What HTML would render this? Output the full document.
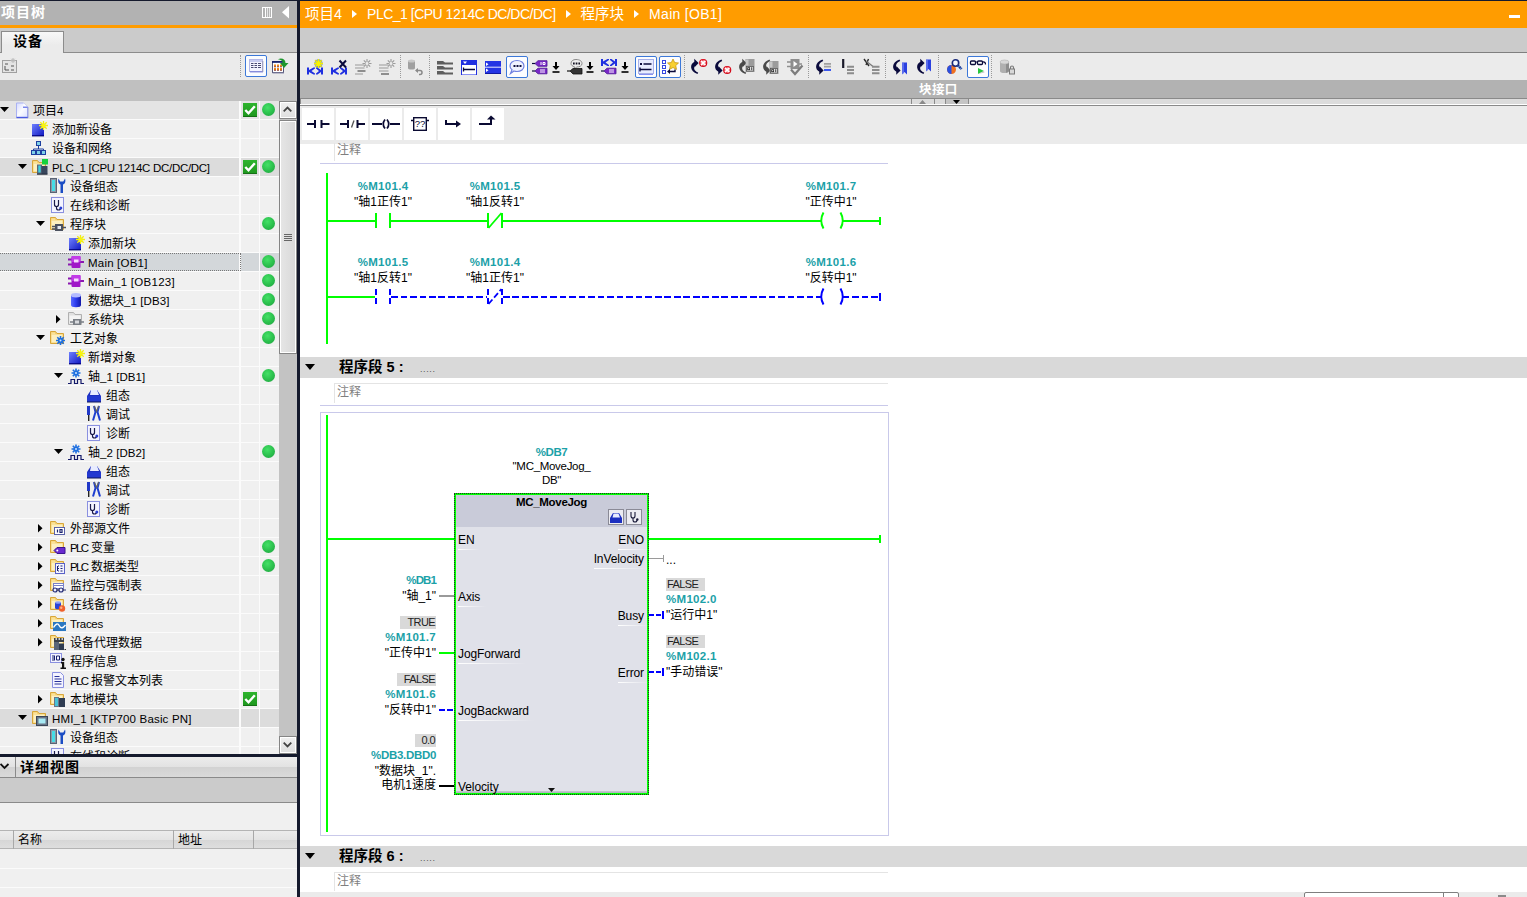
<!DOCTYPE html>
<html lang="zh-CN"><head><meta charset="utf-8"><title>TIA Portal - Main [OB1]</title>
<style>

html,body{margin:0;padding:0;}
body{width:1527px;height:897px;overflow:hidden;background:#fff;position:relative;
 font-family:"Liberation Sans", "Noto Sans CJK SC", sans-serif;font-size:12px;color:#000;}
.a{position:absolute;}
.t{position:absolute;white-space:nowrap;line-height:1;}
svg{position:absolute;overflow:visible;}

.row{position:absolute;left:0;width:240px;height:18px;}
.row .t{top:3px;font-size:12px;}
.sep{position:absolute;left:0;width:279px;height:1px;background:#fbfbfb;}
.dot{position:absolute;width:13px;height:13px;border-radius:50%;background:radial-gradient(circle at 42% 36%,#44e066 0%,#2cc24e 50%,#22a843 85%,#1e9a3c 100%);}
.chk{position:absolute;width:14px;height:13px;background:linear-gradient(#2db42d,#1f981f);box-shadow:0 1px 0 #157015;}
.hl{background:#dcdcdc;}
.tb{position:absolute;}
.nethead{position:absolute;left:300px;width:1227px;height:23px;background:#d9d9d9;}
.nethead .t{left:38px;top:4px;font-size:14px;font-weight:bold;font-family:"Liberation Serif","Noto Serif CJK SC",serif;}
.addr{position:absolute;white-space:nowrap;line-height:1;font-size:11.5px;font-weight:bold;color:#1ba1a8;letter-spacing:0.3px;}
.sym{position:absolute;white-space:nowrap;line-height:1;font-size:12px;color:#000;margin-top:1px;}
.val{position:absolute;white-space:nowrap;line-height:13px;height:13px;font-size:11px;letter-spacing:-0.6px;color:#222;background:#d9d9d9;padding:0 2px;}
.vr{padding:0 7px 0 1px;}
.vl{padding:0 1px 0 7px;}
.lp{font-size:12px;letter-spacing:-0.1px;}
.pin{position:absolute;white-space:nowrap;line-height:1;font-size:12px;color:#000;}
.bc{display:inline-block;width:0;height:0;border-left:5px solid #fff;border-top:4px solid transparent;border-bottom:4px solid transparent;margin:0 10px 1px 10px;}
.l{font-size:11.5px;letter-spacing:-0.3px;}
.l14{font-size:14px;letter-spacing:-0.5px;}
.ul{position:absolute;left:0;right:-6px;bottom:-4px;height:1px;background:linear-gradient(90deg,#fff,rgba(255,255,255,0));}

</style></head><body>
<div class="a" style="left:0;top:0;width:1527px;height:1px;background:#151a2d"></div>
<div class="a" style="left:0;top:1px;width:297px;height:24px;background:#b2b2b2"></div>
<span class="t" style="left:1px;top:5px;font-size:14px;letter-spacing:1px;font-weight:bold;color:#fff">项目树</span>
<svg style="left:262px;top:7px" width="10" height="11" viewBox="0 0 10 11"><rect x="0.500" y="0.500" width="9" height="10" fill="none" stroke="#fff"/><path d="M3.500 1V10" stroke="#fff"/><path d="M5.500 1V10M7.500 1V10" stroke="#e6e6e6"/></svg>
<svg style="left:282px;top:6px" width="7" height="12" viewBox="0 0 7 12"><path d="M7 0V12.500L0 6.250Z" fill="#fff"/></svg>
<div class="a" style="left:0;top:25px;width:297px;height:3px;background:#ff9c00"></div>
<div class="a" style="left:0;top:28px;width:297px;height:24px;background:#cbcbcb"></div>
<div class="a" style="left:0;top:52px;width:297px;height:1px;background:#8c8c8c"></div>
<div class="a" style="left:1px;top:31px;width:61px;height:22px;background:linear-gradient(#f8f8f8,#ebebeb 60%);border:1px solid #8c8c8c;border-bottom:none;box-sizing:content-box"></div>
<span class="t" style="left:13px;top:34px;font-size:14px;letter-spacing:1px;font-weight:bold;color:#000">设备</span>
<div class="a" style="left:0;top:53px;width:297px;height:27px;background:#ebebeb"></div>
<svg style="left:2px;top:58px" width="16" height="16" viewBox="0 0 16 16"><rect x="0.500" y="2.500" width="14" height="12" fill="#e4e4e4" stroke="#a0a0a0"/><path d="M3 6H6M3 8V12H7M9 8H12M9 12H12" stroke="#555" fill="none"/><path d="M11 0V5M8.500 2.500H13.500M9.300 .8L12.700 4.200M12.700 .8L9.300 4.200" stroke="#b8b8b8"/></svg>
<div class="a" style="left:240px;top:55px;width:0;height:22px;border-left:1px dotted #9a9a9a"></div>
<div class="a" style="left:245px;top:55px;width:22px;height:22px;border:1px solid #3c78d8;border-radius:2px;background:#fafcff;box-sizing:border-box"></div>
<svg style="left:249px;top:59px" width="14" height="14" viewBox="0 0 14 14"><rect x="0.500" y="0.500" width="13" height="12" fill="#f4f4ff" stroke="#b4b8e8"/><path d="M1 2H13" stroke="#c8ccf0" stroke-width="2"/><path d="M2 4.500H4.500M5.500 4.500H8M9 4.500H12M2 6.500H4.500M5.500 6.500H8M9 6.500H12M2 8.500H4.500M5.500 8.500H8M9 8.500H12" stroke="#4a4a72" stroke-width="1.200"/><path d="M1 12.800H14" stroke="#7a80d8" stroke-width="1.200"/><path d="M13.800 2V13" stroke="#9a9ab8"/></svg>
<svg style="left:272px;top:58px" width="17" height="16" viewBox="0 0 17 16"><rect x="0.500" y="3.500" width="11" height="11" fill="#fff" stroke="#55587a"/><path d="M0 4H12" stroke="#0c1a6a" stroke-width="1.600"/><path d="M2 7.500H4M5 7.500H7M8 7.500H10M2 11H4M5 11H7M8 11H10" stroke="#f08a1a" stroke-width="2.200"/><path d="M2 8.800H4M5 8.800H7M8 8.800H10M2 12.300H4M5 12.300H7M8 12.300H10" stroke="#7a1a0a" stroke-width=".8"/><path d="M6 1.200C10 -.5 13.500 1.500 13.500 5H16.500L12 10L8 5H10.800C10.800 3 9 1.800 6 1.200Z" fill="#1e962e"/><path d="M.5 15H12" stroke="#8a8aa8"/></svg>
<div class="a" style="left:0;top:80px;width:297px;height:21px;background:#c0c0c0"></div>
<div class="a" style="left:0;top:101px;width:279px;height:653px;background:#f0f0f0;overflow:hidden" id="tree">
<div class="a" style="left:0;top:0;width:279px;height:18px;background:#e4e4e4"></div>
<svg style="left:0px;top:6px" width="9" height="5" viewBox="0 0 9 5"><path d="M0 0H9L4.5 5Z" fill="#000"/></svg>
<svg style="left:16px;top:1px" width="16" height="16" viewBox="0 0 16 16"><defs><linearGradient id="gPJ" x1="0" y1="0" x2="1" y2="1"><stop offset="0" stop-color="#d4daff"/><stop offset=".5" stop-color="#fbfbff"/><stop offset="1" stop-color="#dde2ff"/></linearGradient></defs><path d="M.5 1H7.500L11.500 5V15.500H.5Z" fill="url(#gPJ)" stroke="#aab2f2"/><path d="M7.500 1V5H11.500" fill="#fff" stroke="none"/><path d="M7 5.200H11.500" stroke="#5a6ae6" stroke-width="1.200"/><path d="M.5 15.500H12" stroke="#4a5ae2" stroke-width="1.400"/><path d="M12 5V16" stroke="#8a92d8" stroke-width=".8"/></svg>
<span class="t" style="left:33px;top:4px;font-size:12px">项目<span class="l">4</span></span>
<div class="chk" style="left:243px;top:2px"><svg style="left:0;top:0" width="14" height="14" viewBox="0 0 14 14"><path d="M2.300 7L5.500 10.300L11.800 3.200" fill="none" stroke="#fff" stroke-width="2.400"/></svg></div>
<div class="dot" style="left:262px;top:2px"></div>
<div class="sep" style="top:18px"></div>
<svg style="left:31px;top:20px" width="16" height="16" viewBox="0 0 16 16"><defs><linearGradient id="gAN" x1="0" y1="0" x2="1" y2="1"><stop offset="0" stop-color="#6e80ff"/><stop offset="1" stop-color="#1018c0"/></linearGradient></defs><rect x="1" y="3" width="12" height="12" fill="url(#gAN)"/><path d="M1 14.800H13" stroke="#00007a" stroke-width="1.200"/><g stroke="#f2ee10" stroke-width="1.300"><path d="M12.500 0V9M8 4.500H17M9.300 1.300L15.700 7.700M15.700 1.300L9.300 7.700"/></g><circle cx="12.500" cy="4.500" r="2" fill="#f8f410"/></svg>
<span class="t" style="left:52px;top:23px;font-size:12px">添加新设备</span>
<div class="sep" style="top:37px"></div>
<svg style="left:31px;top:39px" width="16" height="16" viewBox="0 0 16 16"><rect x="5.5" y="1.5" width="4" height="4" fill="#7fd0e8" stroke="#1d3fa0"/><path d="M7.5 6V9M2.5 11V9H12.5V11" fill="none" stroke="#1d3fa0"/><rect x="0.5" y="10.5" width="4" height="4" fill="#7fd0e8" stroke="#1d3fa0"/><rect x="5.5" y="10.5" width="4" height="4" fill="#7fd0e8" stroke="#1d3fa0"/><rect x="10.5" y="10.5" width="4" height="4" fill="#7fd0e8" stroke="#1d3fa0"/></svg>
<span class="t" style="left:52px;top:42px;font-size:12px">设备和网络</span>
<div class="sep" style="top:56px"></div>
<div class="a" style="left:0;top:57px;width:279px;height:18px;background:#dcdcdc"></div>
<svg style="left:18px;top:63px" width="9" height="5" viewBox="0 0 9 5"><path d="M0 0H9L4.5 5Z" fill="#000"/></svg>
<svg style="left:32px;top:58px" width="16" height="16" viewBox="0 0 16 16"><path d="M.5 1.500H5.500L7 3.500H13.500V13.500H.5Z" fill="#f6d272" stroke="#d8a63a"/><path d="M1.500 4.500H12.500V12.500H1.500Z" fill="#fdf0c0"/><path d="M1.500 2.500H5V4.500H1.500Z" fill="#fbe29a"/><rect x="5" y="5.500" width="5" height="9.500" fill="#5a6678"/><rect x="6.300" y="6.500" width="2.400" height="7" fill="#3fd2e0"/><rect x="9.500" y="7" width="6" height="8" fill="#39465c"/><rect x="10" y="0" width="6" height="5.500" fill="#14d23c"/><path d="M5 15.200H15.500" stroke="#1c2434"/></svg>
<span class="t" style="left:52px;top:61px;font-size:12px"><span class="l">PLC_1 [CPU 1214C DC/DC/DC]</span></span>
<div class="chk" style="left:243px;top:59px"><svg style="left:0;top:0" width="14" height="14" viewBox="0 0 14 14"><path d="M2.300 7L5.500 10.300L11.800 3.200" fill="none" stroke="#fff" stroke-width="2.400"/></svg></div>
<div class="dot" style="left:262px;top:59px"></div>
<div class="sep" style="top:75px"></div>
<svg style="left:50px;top:77px" width="16" height="16" viewBox="0 0 16 16"><rect x="0.500" y="0.500" width="6" height="14" fill="#8e96a4" stroke="#5a6474"/><rect x="2" y="2" width="3" height="11" fill="#46dce6"/><path d="M8.500 .5C7.500 3.500 8.500 6 10.500 6.500V15H13V6.500C15 6 16 3.500 15 .5L13.300 3.500H10.200Z" fill="#1a4cc4"/></svg>
<span class="t" style="left:70px;top:80px;font-size:12px">设备组态</span>
<div class="sep" style="top:94px"></div>
<svg style="left:50px;top:96px" width="16" height="16" viewBox="0 0 16 16"><rect x="1.5" y="0.5" width="12" height="15" fill="#f4f4ff" stroke="#8a90e0"/><path d="M4.5 3V7.5A2 2 0 0 0 8.500 7.500V3M6.5 9.500V11A2 2 0 0 0 10.500 11" fill="none" stroke="#1a1a4a" stroke-width="1.2"/><circle cx="10.800" cy="11" r="1.500" fill="#2a3fd0"/></svg>
<span class="t" style="left:70px;top:99px;font-size:12px">在线和诊断</span>
<div class="sep" style="top:113px"></div>
<svg style="left:36px;top:120px" width="9" height="5" viewBox="0 0 9 5"><path d="M0 0H9L4.5 5Z" fill="#000"/></svg>
<svg style="left:50px;top:115px" width="16" height="16" viewBox="0 0 16 16"><path d="M.5 1.500H5.500L7 3.500H13.500V13.500H.5Z" fill="#f6d272" stroke="#d8a63a"/><path d="M1.500 4.500H12.500V12.500H1.500Z" fill="#fdf0c0"/><path d="M1.500 2.500H5V4.500H1.500Z" fill="#fbe29a"/><rect x="5" y="8" width="8" height="7" fill="#4c5260"/><path d="M2 10.500H5M2 13H5M13 11.500H16" stroke="#4c5260" stroke-width="1.500"/><rect x="7.500" y="10" width="3.500" height="3" fill="#e4e8f0"/></svg>
<span class="t" style="left:70px;top:118px;font-size:12px">程序块</span>
<div class="dot" style="left:262px;top:116px"></div>
<div class="sep" style="top:132px"></div>
<svg style="left:68px;top:134px" width="16" height="16" viewBox="0 0 16 16"><defs><linearGradient id="gAN" x1="0" y1="0" x2="1" y2="1"><stop offset="0" stop-color="#6e80ff"/><stop offset="1" stop-color="#1018c0"/></linearGradient></defs><rect x="1" y="3" width="12" height="12" fill="url(#gAN)"/><path d="M1 14.800H13" stroke="#00007a" stroke-width="1.200"/><g stroke="#f2ee10" stroke-width="1.300"><path d="M12.500 0V9M8 4.500H17M9.300 1.300L15.700 7.700M15.700 1.300L9.300 7.700"/></g><circle cx="12.500" cy="4.500" r="2" fill="#f8f410"/></svg>
<span class="t" style="left:88px;top:137px;font-size:12px">添加新块</span>
<div class="sep" style="top:151px"></div>
<div class="a" style="left:0;top:152px;width:279px;height:18px;background:#d3d7da"></div>
<div class="a" style="left:-1px;top:152px;width:242px;height:18px;border:1px dotted #777;box-sizing:border-box;z-index:2"></div>
<svg style="left:68px;top:153px" width="16" height="16" viewBox="0 0 16 16"><path d="M0 5.500H4M0 10.500H4M12 8H16" stroke="#8a18b0" stroke-width="2"/><rect x="3.500" y="2" width="9" height="12" rx="1" fill="#a018c8"/><rect x="3.500" y="2" width="9" height="6" rx="1" fill="#c23ce8"/><rect x="6" y="5.500" width="4.500" height="3" fill="#f6dcfc"/></svg>
<span class="t" style="left:88px;top:156px;font-size:12px"><span class="l" style="letter-spacing:0.2px">Main [OB1]</span></span>
<div class="dot" style="left:262px;top:154px"></div>
<div class="sep" style="top:170px"></div>
<svg style="left:68px;top:172px" width="16" height="16" viewBox="0 0 16 16"><path d="M0 5.500H4M0 10.500H4M12 8H16" stroke="#8a18b0" stroke-width="2"/><rect x="3.500" y="2" width="9" height="12" rx="1" fill="#a018c8"/><rect x="3.500" y="2" width="9" height="6" rx="1" fill="#c23ce8"/><rect x="6" y="5.500" width="4.500" height="3" fill="#f6dcfc"/></svg>
<span class="t" style="left:88px;top:175px;font-size:12px"><span class="l" style="letter-spacing:0.28px">Main_1 [OB123]</span></span>
<div class="dot" style="left:262px;top:173px"></div>
<div class="sep" style="top:189px"></div>
<svg style="left:68px;top:191px" width="16" height="16" viewBox="0 0 16 16"><defs><linearGradient id="gDB" x1="0" y1="0" x2="1" y2="0"><stop offset="0" stop-color="#5c6cff"/><stop offset=".45" stop-color="#3040f0"/><stop offset="1" stop-color="#1218a8"/></linearGradient></defs><path d="M3 3V13A5 2.200 0 0 0 13 13V3Z" fill="url(#gDB)"/><ellipse cx="8" cy="3.200" rx="5" ry="2.200" fill="#b4bcff"/></svg>
<span class="t" style="left:88px;top:194px;font-size:12px">数据块<span class="l" style="letter-spacing:0.08px">_1 [DB3]</span></span>
<div class="dot" style="left:262px;top:192px"></div>
<div class="sep" style="top:208px"></div>
<svg style="left:56px;top:214px" width="4" height="8" viewBox="0 0 4 8"><path d="M0 0V8.500L4.500 4.250Z" fill="#000"/></svg>
<svg style="left:68px;top:210px" width="16" height="16" viewBox="0 0 16 16"><path d="M.5 1.500H5.500L7 3.500H13.500V13.500H.5Z" fill="#e0e0e0" stroke="#b0b0b0"/><path d="M1.500 4.500H12.500V12.500H1.500Z" fill="#f4f4f4"/><rect x="5" y="8" width="8" height="6" fill="#7a7f86"/><path d="M2 11H5M13 11H16" stroke="#7a7f86" stroke-width="1.5"/><rect x="7" y="9.5" width="4" height="3" fill="#d8dade"/></svg>
<span class="t" style="left:88px;top:213px;font-size:12px">系统块</span>
<div class="dot" style="left:262px;top:211px"></div>
<div class="sep" style="top:227px"></div>
<svg style="left:36px;top:234px" width="9" height="5" viewBox="0 0 9 5"><path d="M0 0H9L4.5 5Z" fill="#000"/></svg>
<svg style="left:50px;top:229px" width="16" height="16" viewBox="0 0 16 16"><path d="M.5 1.500H5.500L7 3.500H13.500V13.500H.5Z" fill="#f6d272" stroke="#d8a63a"/><path d="M1.500 4.500H12.500V12.500H1.500Z" fill="#fdf0c0"/><path d="M1.500 2.500H5V4.500H1.500Z" fill="#fbe29a"/><g transform="translate(10.500 10.500)"><g stroke="#1e6fe0" stroke-width="1.600"><path d="M0 -4.500V4.500M-4.500 0H4.500M-3.200 -3.200L3.200 3.200M3.200 -3.200L-3.200 3.200"/></g><circle r="2.600" fill="#1e6fe0"/><circle r="1" fill="#cfe4ff"/></g></svg>
<span class="t" style="left:70px;top:232px;font-size:12px">工艺对象</span>
<div class="dot" style="left:262px;top:230px"></div>
<div class="sep" style="top:246px"></div>
<svg style="left:68px;top:248px" width="16" height="16" viewBox="0 0 16 16"><defs><linearGradient id="gAN" x1="0" y1="0" x2="1" y2="1"><stop offset="0" stop-color="#6e80ff"/><stop offset="1" stop-color="#1018c0"/></linearGradient></defs><rect x="1" y="3" width="12" height="12" fill="url(#gAN)"/><path d="M1 14.800H13" stroke="#00007a" stroke-width="1.200"/><g stroke="#f2ee10" stroke-width="1.300"><path d="M12.500 0V9M8 4.500H17M9.300 1.300L15.700 7.700M15.700 1.300L9.300 7.700"/></g><circle cx="12.500" cy="4.500" r="2" fill="#f8f410"/></svg>
<span class="t" style="left:88px;top:251px;font-size:12px">新增对象</span>
<div class="sep" style="top:265px"></div>
<svg style="left:54px;top:272px" width="9" height="5" viewBox="0 0 9 5"><path d="M0 0H9L4.5 5Z" fill="#000"/></svg>
<svg style="left:68px;top:267px" width="16" height="16" viewBox="0 0 16 16"><g transform="translate(8 5)"><g stroke="#1e6fe0" stroke-width="1.600"><path d="M0 -4.500V4.500M-4.500 0H4.500M-3.200 -3.200L3.200 3.200M3.200 -3.200L-3.200 3.200"/></g><circle r="2.600" fill="#1e6fe0"/><circle r="1" fill="#cfe4ff"/></g><path d="M0 15.500H3V11.500H6.500V15.500H9.500V11.500H13V15.500H16" fill="none" stroke="#141a6a" stroke-width="1.200"/></svg>
<span class="t" style="left:88px;top:270px;font-size:12px">轴<span class="l" style="letter-spacing:0.06px">_1 [DB1]</span></span>
<div class="dot" style="left:262px;top:268px"></div>
<div class="sep" style="top:284px"></div>
<svg style="left:86px;top:286px" width="16" height="16" viewBox="0 0 16 16"><path d="M1 9L5 3H11L15 9V15H1Z" fill="#1c2fc0"/><path d="M5 3H11L13 8H4Z" fill="#e8ecff"/><path d="M1 9H15V15H1Z" fill="#2238d0"/><path d="M1 15H15" stroke="#0c145a"/></svg>
<span class="t" style="left:106px;top:289px;font-size:12px">组态</span>
<div class="sep" style="top:303px"></div>
<svg style="left:86px;top:305px" width="16" height="16" viewBox="0 0 16 16"><rect x="1" y="0" width="3" height="9" fill="#2038c8"/><rect x="2" y="9" width="1.400" height="6" fill="#222"/><path d="M8 0L9.500 6L7 14.500M13 0L11.500 6L14 14.500" fill="none" stroke="#1e3fd0" stroke-width="2"/><path d="M8.300 0L10.500 5.500L12.700 0" fill="none" stroke="#666" stroke-width="1.200"/></svg>
<span class="t" style="left:106px;top:308px;font-size:12px">调试</span>
<div class="sep" style="top:322px"></div>
<svg style="left:86px;top:324px" width="16" height="16" viewBox="0 0 16 16"><rect x="1.5" y="0.5" width="12" height="15" fill="#f4f4ff" stroke="#8a90e0"/><path d="M4.5 3V7.5A2 2 0 0 0 8.500 7.500V3M6.5 9.500V11A2 2 0 0 0 10.500 11" fill="none" stroke="#1a1a4a" stroke-width="1.2"/><circle cx="10.800" cy="11" r="1.500" fill="#2a3fd0"/></svg>
<span class="t" style="left:106px;top:327px;font-size:12px">诊断</span>
<div class="sep" style="top:341px"></div>
<svg style="left:54px;top:348px" width="9" height="5" viewBox="0 0 9 5"><path d="M0 0H9L4.5 5Z" fill="#000"/></svg>
<svg style="left:68px;top:343px" width="16" height="16" viewBox="0 0 16 16"><g transform="translate(8 5)"><g stroke="#1e6fe0" stroke-width="1.600"><path d="M0 -4.500V4.500M-4.500 0H4.500M-3.200 -3.200L3.200 3.200M3.200 -3.200L-3.200 3.200"/></g><circle r="2.600" fill="#1e6fe0"/><circle r="1" fill="#cfe4ff"/></g><path d="M0 15.500H3V11.500H6.500V15.500H9.500V11.500H13V15.500H16" fill="none" stroke="#141a6a" stroke-width="1.200"/></svg>
<span class="t" style="left:88px;top:346px;font-size:12px">轴<span class="l" style="letter-spacing:0.06px">_2 [DB2]</span></span>
<div class="dot" style="left:262px;top:344px"></div>
<div class="sep" style="top:360px"></div>
<svg style="left:86px;top:362px" width="16" height="16" viewBox="0 0 16 16"><path d="M1 9L5 3H11L15 9V15H1Z" fill="#1c2fc0"/><path d="M5 3H11L13 8H4Z" fill="#e8ecff"/><path d="M1 9H15V15H1Z" fill="#2238d0"/><path d="M1 15H15" stroke="#0c145a"/></svg>
<span class="t" style="left:106px;top:365px;font-size:12px">组态</span>
<div class="sep" style="top:379px"></div>
<svg style="left:86px;top:381px" width="16" height="16" viewBox="0 0 16 16"><rect x="1" y="0" width="3" height="9" fill="#2038c8"/><rect x="2" y="9" width="1.400" height="6" fill="#222"/><path d="M8 0L9.500 6L7 14.500M13 0L11.500 6L14 14.500" fill="none" stroke="#1e3fd0" stroke-width="2"/><path d="M8.300 0L10.500 5.500L12.700 0" fill="none" stroke="#666" stroke-width="1.200"/></svg>
<span class="t" style="left:106px;top:384px;font-size:12px">调试</span>
<div class="sep" style="top:398px"></div>
<svg style="left:86px;top:400px" width="16" height="16" viewBox="0 0 16 16"><rect x="1.5" y="0.5" width="12" height="15" fill="#f4f4ff" stroke="#8a90e0"/><path d="M4.5 3V7.5A2 2 0 0 0 8.500 7.500V3M6.5 9.500V11A2 2 0 0 0 10.500 11" fill="none" stroke="#1a1a4a" stroke-width="1.2"/><circle cx="10.800" cy="11" r="1.500" fill="#2a3fd0"/></svg>
<span class="t" style="left:106px;top:403px;font-size:12px">诊断</span>
<div class="sep" style="top:417px"></div>
<svg style="left:38px;top:423px" width="4" height="8" viewBox="0 0 4 8"><path d="M0 0V8.500L4.500 4.250Z" fill="#000"/></svg>
<svg style="left:50px;top:419px" width="16" height="16" viewBox="0 0 16 16"><path d="M.5 1.500H5.500L7 3.500H13.500V13.500H.5Z" fill="#f6d272" stroke="#d8a63a"/><path d="M1.500 4.500H12.500V12.500H1.500Z" fill="#fdf0c0"/><path d="M1.500 2.500H5V4.500H1.500Z" fill="#fbe29a"/><rect x="4.500" y="7.500" width="10" height="7" fill="#fff" stroke="#5a62a8"/><path d="M7.500 9.500V12.500M10 9.500H12V12.500H10Z" fill="none" stroke="#1a2270" stroke-width="1.200"/></svg>
<span class="t" style="left:70px;top:422px;font-size:12px">外部源文件</span>
<div class="sep" style="top:436px"></div>
<svg style="left:38px;top:442px" width="4" height="8" viewBox="0 0 4 8"><path d="M0 0V8.500L4.500 4.250Z" fill="#000"/></svg>
<svg style="left:50px;top:438px" width="16" height="16" viewBox="0 0 16 16"><path d="M.5 1.500H5.500L7 3.500H13.500V13.500H.5Z" fill="#f6d272" stroke="#d8a63a"/><path d="M1.500 4.500H12.500V12.500H1.500Z" fill="#fdf0c0"/><path d="M1.500 2.500H5V4.500H1.500Z" fill="#fbe29a"/><path d="M4 11.500L7 8.500H15V14.500H7Z" fill="#6a2ad0" stroke="#3a1590"/><circle cx="7.300" cy="11.500" r="1" fill="#fff"/></svg>
<span class="t" style="left:70px;top:441px;font-size:12px"><span class="l" style="letter-spacing:-1.6px">PLC</span> 变量</span>
<div class="dot" style="left:262px;top:439px"></div>
<div class="sep" style="top:455px"></div>
<svg style="left:38px;top:461px" width="4" height="8" viewBox="0 0 4 8"><path d="M0 0V8.500L4.500 4.250Z" fill="#000"/></svg>
<svg style="left:50px;top:457px" width="16" height="16" viewBox="0 0 16 16"><path d="M.5 1.500H5.500L7 3.500H13.500V13.500H.5Z" fill="#f6d272" stroke="#d8a63a"/><path d="M1.500 4.500H12.500V12.500H1.500Z" fill="#fdf0c0"/><path d="M1.500 2.500H5V4.500H1.500Z" fill="#fbe29a"/><rect x="5.500" y="5.500" width="9" height="10" fill="#f4f4ff" stroke="#5a62c8"/><path d="M8 8H9M8 10.500H9M8 13H9M10.500 8H12.500M10.500 10.500H12.500M10.500 13H12.500M7.500 8V13" stroke="#1a2270"/></svg>
<span class="t" style="left:70px;top:460px;font-size:12px"><span class="l" style="letter-spacing:-1.6px">PLC</span> 数据类型</span>
<div class="dot" style="left:262px;top:458px"></div>
<div class="sep" style="top:474px"></div>
<svg style="left:38px;top:480px" width="4" height="8" viewBox="0 0 4 8"><path d="M0 0V8.500L4.500 4.250Z" fill="#000"/></svg>
<svg style="left:50px;top:476px" width="16" height="16" viewBox="0 0 16 16"><path d="M.5 1.500H5.500L7 3.500H13.500V13.500H.5Z" fill="#f6d272" stroke="#d8a63a"/><path d="M1.500 4.500H12.500V12.500H1.500Z" fill="#fdf0c0"/><path d="M1.500 2.500H5V4.500H1.500Z" fill="#fbe29a"/><rect x="3.500" y="6.500" width="10" height="5" fill="#fff" stroke="#7880c8"/><path d="M4 8.500H13" stroke="#7880c8"/><circle cx="5" cy="13" r="2" fill="#eef" stroke="#26307a" stroke-width="1.200"/><circle cx="11" cy="13" r="2" fill="#eef" stroke="#26307a" stroke-width="1.200"/><path d="M7 13H9M13 13H16" stroke="#26307a" stroke-width="1.200"/></svg>
<span class="t" style="left:70px;top:479px;font-size:12px">监控与强制表</span>
<div class="sep" style="top:493px"></div>
<svg style="left:38px;top:499px" width="4" height="8" viewBox="0 0 4 8"><path d="M0 0V8.500L4.500 4.250Z" fill="#000"/></svg>
<svg style="left:50px;top:495px" width="16" height="16" viewBox="0 0 16 16"><path d="M.5 1.500H5.500L7 3.500H13.500V13.500H.5Z" fill="#f6d272" stroke="#d8a63a"/><path d="M1.500 4.500H12.500V12.500H1.500Z" fill="#fdf0c0"/><path d="M1.500 2.500H5V4.500H1.500Z" fill="#fbe29a"/><path d="M5 6.500V12A3 1.300 0 0 0 11 12V6.500Z" fill="#2a44d8"/><ellipse cx="8" cy="6.500" rx="3" ry="1.300" fill="#8ea0f8"/><circle cx="12" cy="12.500" r="3.200" fill="#f0602a"/><circle cx="11.200" cy="11.700" r="1.200" fill="#fbb08c"/></svg>
<span class="t" style="left:70px;top:498px;font-size:12px">在线备份</span>
<div class="sep" style="top:512px"></div>
<svg style="left:38px;top:518px" width="4" height="8" viewBox="0 0 4 8"><path d="M0 0V8.500L4.500 4.250Z" fill="#000"/></svg>
<svg style="left:50px;top:514px" width="16" height="16" viewBox="0 0 16 16"><path d="M.5 1.500H5.500L7 3.500H13.500V13.500H.5Z" fill="#f6d272" stroke="#d8a63a"/><path d="M1.500 4.500H12.500V12.500H1.500Z" fill="#fdf0c0"/><path d="M1.500 2.500H5V4.500H1.500Z" fill="#fbe29a"/><rect x="3" y="7" width="13" height="9" fill="#2b78c2"/><path d="M3.500 12.500C6 8 8 8 9.500 11S13 13 15.500 10" fill="none" stroke="#fff" stroke-width="1.400"/></svg>
<span class="t" style="left:70px;top:517px;font-size:12px"><span class="l">Traces</span></span>
<div class="sep" style="top:531px"></div>
<svg style="left:38px;top:537px" width="4" height="8" viewBox="0 0 4 8"><path d="M0 0V8.500L4.500 4.250Z" fill="#000"/></svg>
<svg style="left:50px;top:533px" width="16" height="16" viewBox="0 0 16 16"><path d="M.5 1.500H5.500L7 3.500H13.500V13.500H.5Z" fill="#f6d272" stroke="#d8a63a"/><path d="M1.500 4.500H12.500V12.500H1.500Z" fill="#fdf0c0"/><path d="M1.500 2.500H5V4.500H1.500Z" fill="#fbe29a"/><rect x="4" y="4" width="10" height="4" fill="#3a4048"/><path d="M5.500 5H7M8.500 5H10M11.500 5H13" stroke="#fff" stroke-width="1.500"/><rect x="4" y="8" width="5" height="8" fill="#5a6678"/><rect x="9" y="9.500" width="5" height="6.500" fill="#2f3c52"/><path d="M14.500 15.500H16" stroke="#333"/></svg>
<span class="t" style="left:70px;top:536px;font-size:12px">设备代理数据</span>
<div class="sep" style="top:550px"></div>
<svg style="left:50px;top:552px" width="16" height="16" viewBox="0 0 16 16"><rect x="0.500" y="0.500" width="11" height="9" fill="#f4f4ff" stroke="#8a90e0"/><path d="M2 3H4M2 5H4M2 7H4M4.500 2.500V7.500M6.500 3H9.500V7H6.500Z" fill="none" stroke="#1a2270"/><circle cx="13" cy="6.500" r="1.700" fill="#111"/><path d="M11 9H14.200V14.500H16V16H10.500V14.500H12V10.500H11Z" fill="#111"/></svg>
<span class="t" style="left:70px;top:555px;font-size:12px">程序信息</span>
<div class="sep" style="top:569px"></div>
<svg style="left:50px;top:571px" width="16" height="16" viewBox="0 0 16 16"><path d="M2.500 .5H10.500L13.500 3.500V15.500H2.500Z" fill="#f4f4ff" stroke="#8a90e0"/><path d="M4.500 4.500H9.500M4.500 7H11.500M4.500 9.500H11.500M4.500 12H11.500" stroke="#2a349a" stroke-width="1.200"/></svg>
<span class="t" style="left:70px;top:574px;font-size:12px"><span class="l" style="letter-spacing:-1.6px">PLC</span> 报警文本列表</span>
<div class="sep" style="top:588px"></div>
<svg style="left:38px;top:594px" width="4" height="8" viewBox="0 0 4 8"><path d="M0 0V8.500L4.500 4.250Z" fill="#000"/></svg>
<svg style="left:50px;top:590px" width="16" height="16" viewBox="0 0 16 16"><path d="M.5 1.500H5.500L7 3.500H13.500V13.500H.5Z" fill="#f6d272" stroke="#d8a63a"/><path d="M1.500 4.500H12.500V12.500H1.500Z" fill="#fdf0c0"/><path d="M1.500 2.500H5V4.500H1.500Z" fill="#fbe29a"/><rect x="4" y="6" width="5" height="10" fill="#6a7688"/><rect x="5" y="7" width="3" height="8" fill="#49c2d8"/><rect x="9" y="7" width="6" height="9" fill="#2f3c52"/></svg>
<span class="t" style="left:70px;top:593px;font-size:12px">本地模块</span>
<div class="chk" style="left:243px;top:591px"><svg style="left:0;top:0" width="14" height="14" viewBox="0 0 14 14"><path d="M2.300 7L5.500 10.300L11.800 3.200" fill="none" stroke="#fff" stroke-width="2.400"/></svg></div>
<div class="sep" style="top:607px"></div>
<div class="a" style="left:0;top:608px;width:279px;height:18px;background:#dcdcdc"></div>
<svg style="left:18px;top:614px" width="9" height="5" viewBox="0 0 9 5"><path d="M0 0H9L4.5 5Z" fill="#000"/></svg>
<svg style="left:32px;top:609px" width="16" height="16" viewBox="0 0 16 16"><path d="M.5 1.500H5.500L7 3.500H13.500V13.500H.5Z" fill="#f6d272" stroke="#d8a63a"/><path d="M1.500 4.500H12.500V12.500H1.500Z" fill="#fdf0c0"/><path d="M1.500 2.500H5V4.500H1.500Z" fill="#fbe29a"/><rect x="4.500" y="6.500" width="11" height="9" fill="#6a7688" stroke="#3b4658"/><rect x="6.500" y="8.500" width="7" height="5" fill="#a8eaf4"/></svg>
<span class="t" style="left:52px;top:612px;font-size:12px"><span class="l" style="letter-spacing:0.18px">HMI_1 [KTP700 Basic PN]</span></span>
<div class="sep" style="top:626px"></div>
<svg style="left:50px;top:628px" width="16" height="16" viewBox="0 0 16 16"><rect x="0.500" y="0.500" width="6" height="14" fill="#8e96a4" stroke="#5a6474"/><rect x="2" y="2" width="3" height="11" fill="#46dce6"/><path d="M8.500 .5C7.500 3.500 8.500 6 10.500 6.500V15H13V6.500C15 6 16 3.500 15 .5L13.300 3.500H10.200Z" fill="#1a4cc4"/></svg>
<span class="t" style="left:70px;top:631px;font-size:12px">设备组态</span>
<div class="sep" style="top:645px"></div>
<svg style="left:50px;top:647px" width="16" height="16" viewBox="0 0 16 16"><rect x="1.5" y="0.5" width="12" height="15" fill="#f4f4ff" stroke="#8a90e0"/><path d="M4.5 3V7.5A2 2 0 0 0 8.500 7.500V3M6.5 9.500V11A2 2 0 0 0 10.500 11" fill="none" stroke="#1a1a4a" stroke-width="1.2"/><circle cx="10.800" cy="11" r="1.500" fill="#2a3fd0"/></svg>
<span class="t" style="left:70px;top:650px;font-size:12px">在线和诊断</span>
<div class="sep" style="top:664px"></div>
<div class="a" style="left:239px;top:0;width:2px;height:653px;background:#fbfbfb"></div>
<div class="a" style="left:259px;top:0;width:1px;height:653px;background:#fbfbfb"></div>
</div>
<div class="a" style="left:279px;top:101px;width:18px;height:653px;background:#c3c3c3"></div>
<div class="a" style="left:279px;top:101px;width:18px;height:18px;background:linear-gradient(#f0f0f0,#dedede);border:1px solid #858585;box-shadow:inset 0 0 0 1px #fff;box-sizing:border-box"></div>
<svg style="left:283px;top:106px" width="9" height="6" viewBox="0 0 9 6"><path d="M.7 5.300L4.500 1.500L8.300 5.300" fill="none" stroke="#444" stroke-width="1.800"/></svg>
<div class="a" style="left:279px;top:120px;width:18px;height:234px;background:linear-gradient(90deg,#e6e6e6,#d8d8d8);border:1px solid #858585;box-shadow:inset 0 0 0 1px #fff;box-sizing:border-box"></div>
<svg style="left:284px;top:234px" width="8" height="7" viewBox="0 0 8 7"><path d="M0 .5H8M0 2.500H8M0 4.500H8M0 6.500H8" stroke="#666"/></svg>
<div class="a" style="left:279px;top:736px;width:18px;height:18px;background:linear-gradient(#f0f0f0,#dedede);border:1px solid #858585;box-shadow:inset 0 0 0 1px #fff;box-sizing:border-box"></div>
<svg style="left:283px;top:742px" width="9" height="6" viewBox="0 0 9 6"><path d="M.7 .7L4.500 4.500L8.300 .7" fill="none" stroke="#444" stroke-width="1.800"/></svg>
<div class="a" style="left:0;top:754px;width:297px;height:3px;background:#151a2d"></div>
<div class="a" style="left:0;top:757px;width:297px;height:20px;background:linear-gradient(#ececec,#e2e2e2 50%,#d2d2d2 52%,#dadada)"></div>
<div class="a" style="left:15px;top:757px;width:1px;height:20px;background:#8a8a8a"></div>
<svg style="left:0px;top:763px" width="9" height="7" viewBox="0 0 9 7"><path d="M.5 1L4.500 5L8.500 1" fill="none" stroke="#111" stroke-width="1.800"/></svg>
<span class="t" style="left:20px;top:760px;font-size:14px;letter-spacing:1px;font-weight:bold">详细视图</span>
<div class="a" style="left:0;top:777px;width:297px;height:1px;background:#8a8a8a"></div>
<div class="a" style="left:0;top:778px;width:297px;height:24px;background:#cbcbcb"></div>
<div class="a" style="left:0;top:802px;width:297px;height:1px;background:#8a8a8a"></div>
<div class="a" style="left:0;top:803px;width:297px;height:94px;background:#f0f0f0"></div>
<div class="a" style="left:0;top:830px;width:297px;height:19px;background:linear-gradient(#ececec,#e4e4e4 50%,#d6d6d6 52%,#dedede);border-top:1px solid #b4b4b4;border-bottom:1px solid #b4b4b4;box-sizing:border-box"></div>
<div class="a" style="left:13px;top:830px;width:1px;height:19px;background:#a8a8a8"></div>
<div class="a" style="left:173px;top:830px;width:1px;height:19px;background:#a8a8a8"></div>
<div class="a" style="left:253px;top:830px;width:1px;height:19px;background:#a8a8a8"></div>
<span class="t" style="left:18px;top:834px;font-size:12px">名称</span>
<span class="t" style="left:178px;top:834px;font-size:12px">地址</span>
<div class="a" style="left:0;top:868px;width:297px;height:1px;background:#fbfbfb"></div>
<div class="a" style="left:0;top:887px;width:297px;height:1px;background:#fbfbfb"></div>
<div class="a" style="left:297px;top:1px;width:3px;height:896px;background:#151a2d"></div>

<div class="a" style="left:300px;top:1px;width:1227px;height:27px;background:#ff9c00;"></div>
<span class="t" style="left:305px;top:7px;font-size:14.5px;color:#fff">项目4<i class="bc"></i><span class="l14">PLC_1 [CPU 1214C DC/DC/DC]</span><i class="bc"></i>程序块<i class="bc"></i><span class="l14" style="letter-spacing:0.3px">Main [OB1]</span></span>
<div class="a" style="left:1509px;top:15px;width:11px;height:3px;background:#fff;"></div>
<div class="a" style="left:300px;top:28px;width:1227px;height:24px;background:#cbcbcb;"></div>
<div class="a" style="left:300px;top:52px;width:1227px;height:1px;background:#7f7f7f;"></div>
<div class="a" style="left:300px;top:53px;width:1227px;height:27px;background:#ebebeb;"></div>
<svg style="left:307px;top:59px" width="16" height="16" viewBox="0 0 16 16"><g fill="#2030e0"><rect x="0" y="8.500" width="2" height="7"/><path d="M2 11L6.500 8.500H8V9.500L4.500 12L8 14.500V15.500H6.500L2 13Z"/><rect x="14" y="8.500" width="2" height="7"/><path d="M14 11L10.500 8.500H9V9.500L12 12L9 14.500V15.500H10.500L14 13Z"/></g><g stroke="#16407a" stroke-width="2.200" opacity=".55"><path d="M11.500 0V9M7 4.500H16M8.300 1.300L14.700 7.700M14.700 1.300L8.300 7.700"/></g><g stroke="#f4f000" stroke-width="1.300"><path d="M11.500 0V9M7 4.500H16M8.300 1.300L14.700 7.700M14.700 1.300L8.300 7.700"/></g><circle cx="11.500" cy="4.500" r="2.300" fill="#f8f400"/></svg>
<svg style="left:331px;top:59px" width="16" height="16" viewBox="0 0 16 16"><g fill="#2030e0"><rect x="0" y="8.500" width="2" height="7"/><path d="M2 11L6.500 8.500H8V9.500L4.500 12L8 14.500V15.500H6.500L2 13Z"/><rect x="14" y="8.500" width="2" height="7"/><path d="M14 11L10.500 8.500H9V9.500L12 12L9 14.500V15.500H10.500L14 13Z"/></g><path d="M8.500 1.500L15 8.500M15 1.500L8.500 8.500" stroke="#0a0a3c" stroke-width="2"/></svg>
<svg style="left:355px;top:59px" width="16" height="16" viewBox="0 0 16 16"><rect x="0" y="5" width="9.5" height="2" fill="#c2c2c2"/><rect x="0" y="8" width="9.5" height="2" fill="#c2c2c2"/><rect x="2.5" y="11" width="8" height="2" fill="#8e8e8e"/><rect x="0" y="14" width="8" height="2" fill="#c2c2c2"/><g stroke="#9c9c9c" stroke-width="1.100"><path d="M12 0V3M12 6V9M7.500 4.500H10.500M13.500 4.500H16.500M8.800 1.300L11 3.500M13 5.500L15.200 7.700M15.200 1.300L13 3.500M11 5.500L8.800 7.700"/></g></svg>
<svg style="left:379px;top:59px" width="16" height="16" viewBox="0 0 16 16"><rect x="0" y="5" width="9.5" height="2" fill="#c2c2c2"/><rect x="0" y="8" width="9.5" height="2" fill="#c2c2c2"/><rect x="0" y="11" width="9.5" height="2" fill="#c2c2c2"/><rect x="2" y="14" width="8" height="2" fill="#8e8e8e"/><g stroke="#9c9c9c" stroke-width="1.100"><path d="M12 0V3M12 6V9M7.500 4.500H10.500M13.500 4.500H16.500M8.800 1.300L11 3.500M13 5.500L15.200 7.700M15.200 1.300L13 3.500M11 5.500L8.800 7.700"/></g></svg>
<div class="a" style="left:400px;top:55px;width:0;height:23px;border-left:1px dotted #9a9a9a"></div>
<svg style="left:407px;top:59px" width="16" height="16" viewBox="0 0 16 16"><path d="M1 2V9A3.500 1.500 0 0 0 8 9V2Z" fill="#a0a0a0"/><ellipse cx="4.500" cy="2" rx="3.500" ry="1.500" fill="#c8c8c8"/><path d="M9 11.500H13A2 2 0 0 1 13 15.500H12" fill="none" stroke="#8a8a8a" stroke-width="1.500"/><path d="M11 9L8 11.500L11 14Z" fill="#8a8a8a"/></svg>
<div class="a" style="left:429px;top:55px;width:0;height:23px;border-left:1px dotted #9a9a9a"></div>
<svg style="left:437px;top:59px" width="16" height="16" viewBox="0 0 16 16"><path d="M0 2H6L8 3.5H16V5.5H0Z" fill="#5e5e5e"/><path d="M0 7H6L8 8.5H16V10.5H0Z" fill="#5e5e5e"/><path d="M0 12H6L8 13.5H16V15.5H0Z" fill="#5e5e5e"/></svg>
<svg style="left:461px;top:59px" width="16" height="16" viewBox="0 0 16 16"><rect x="0.500" y="1.500" width="15" height="14" fill="#fff" stroke="#2030e0"/><rect x="1" y="2" width="14" height="4" fill="#2030e0"/><path d="M2 2.500H6L4 5Z" fill="#fff"/><path d="M2.500 10.500H14M2.500 8.500V12.500" stroke="#0a0a3c" stroke-width="1.300"/><path d="M1 15.500H15" stroke="#8890f0"/></svg>
<svg style="left:485px;top:59px" width="16" height="16" viewBox="0 0 16 16"><rect x="0" y="2" width="16" height="12.500" fill="#2434e4"/><path d="M0 8.200H16" stroke="#e8eaff" stroke-width="1"/><path d="M1 3.500L3.500 5.200L1 7ZM1 9.500L3.500 11.200L1 13Z" fill="#fff"/><path d="M0 14.500H16" stroke="#1018a0"/></svg>
<div class="a" style="left:506px;top:56px;width:22px;height:22px;background:#fdfdff;border:1px solid #3c78d8;border-radius:2px;box-sizing:border-box"></div>
<svg style="left:509px;top:59px" width="16" height="16" viewBox="0 0 16 16"><path d="M8 1.500C12 1.500 15 3.800 15 7S12 12.500 8 12.500C7 12.500 6 12.300 5 12L1.500 14.500L3 10.800C1.500 9.800 1 8.500 1 7C1 3.800 4 1.500 8 1.500Z" fill="#f0f2ff" stroke="#7080e0" stroke-width="1.200"/><path d="M4.500 7H6.500M7.500 7H9.500M10.500 7H12.500" stroke="#101040" stroke-width="2"/></svg>
<svg style="left:532px;top:59px" width="16" height="16" viewBox="0 0 16 16"><path d="M0 4.5H3" stroke="#0a0a3c" stroke-width="1.200"/><path d="M3 4.5L6 1.7H15V7.3H6Z" fill="#7a28c8" stroke="#4a1590" stroke-width=".8"/><path d="M9 3V6M11 3.500H13V5.500H11Z" stroke="#fff" fill="none"/><path d="M0 12H3" stroke="#0a0a3c" stroke-width="1.200"/><path d="M3 12L6 9.2H15V14.8H6Z" fill="#7a28c8" stroke="#4a1590" stroke-width=".8"/><path d="M8 11H13M8 13H13" stroke="#fff"/></svg>
<svg style="left:552px;top:62px" width="8" height="11" viewBox="0 0 8 11"><path d="M4 0V6" stroke="#000" stroke-width="2"/><path d="M0.500 4H7.500L4 8Z" fill="#000"/><path d="M0.500 10H7.500" stroke="#000" stroke-width="1.600"/></svg>
<svg style="left:567px;top:59px" width="16" height="16" viewBox="0 0 16 16"><path d="M9 0.500C12.500 .5 15 2 15 4.500S12.500 8 9.500 8L7 10.500L7.500 7.800C5.500 7.300 4 6.200 4 4.500C4 2 6 .5 9 .5Z" fill="#ededed" stroke="#8a8a8a"/><path d="M6 4.500H7.700M8.700 4.500H10.400M11.400 4.500H13" stroke="#101020" stroke-width="1.800"/><path d="M0 12H3" stroke="#111" stroke-width="1.200"/><path d="M3 12L6 9.500H15V15H6Z" fill="#333" stroke="#111" stroke-width=".8"/></svg>
<svg style="left:586px;top:62px" width="8" height="11" viewBox="0 0 8 11"><path d="M4 0V6" stroke="#000" stroke-width="2"/><path d="M0.500 4H7.500L4 8Z" fill="#000"/><path d="M0.500 10H7.500" stroke="#000" stroke-width="1.600"/></svg>
<svg style="left:601px;top:59px" width="16" height="16" viewBox="0 0 16 16"><g transform="translate(0 -8.500)"><g fill="#2030e0"><rect x="0" y="8.500" width="2" height="7"/><path d="M2 11L6.500 8.500H8V9.500L4.500 12L8 14.500V15.500H6.500L2 13Z"/><rect x="14" y="8.500" width="2" height="7"/><path d="M14 11L10.500 8.500H9V9.500L12 12L9 14.500V15.500H10.500L14 13Z"/></g></g><path d="M0 12H3" stroke="#0a0a3c" stroke-width="1.200"/><path d="M3 12L6 9.2H15V14.8H6Z" fill="#7a28c8" stroke="#4a1590" stroke-width=".8"/><path d="M8 11H13M8 13H13" stroke="#fff"/></svg>
<svg style="left:621px;top:62px" width="8" height="11" viewBox="0 0 8 11"><path d="M4 0V6" stroke="#000" stroke-width="2"/><path d="M0.500 4H7.500L4 8Z" fill="#000"/><path d="M0.500 10H7.500" stroke="#000" stroke-width="1.600"/></svg>
<div class="a" style="left:635px;top:56px;width:22px;height:22px;background:#fdfdff;border:1px solid #3c78d8;border-radius:2px;box-sizing:border-box"></div>
<svg style="left:638px;top:59px" width="16" height="16" viewBox="0 0 16 16"><rect x="0.500" y="0.500" width="15" height="14" fill="#e8ecff" stroke="#a8b0e8"/><rect x="2" y="4" width="2" height="2" fill="#0a0a3c"/><path d="M5.500 5H13.500M2 10.500H13.500M2 8.500V12.500" stroke="#0a0a3c" stroke-width="1.400"/><path d="M1 15.500H15" stroke="#8890f0"/></svg>
<div class="a" style="left:659px;top:56px;width:22px;height:22px;background:#fdfdff;border:1px solid #3c78d8;border-radius:2px;box-sizing:border-box"></div>
<svg style="left:662px;top:59px" width="16" height="16" viewBox="0 0 16 16"><g fill="#fff" stroke="#3848e0"><rect x="0.500" y="1.500" width="3" height="3"/><rect x="0.500" y="6.500" width="3" height="3"/><rect x="0.500" y="11.500" width="3" height="3"/></g><path d="M11 0L12.700 3.600L16.500 4L13.700 6.600L14.500 10.400L11 8.500L7.500 10.400L8.300 6.600L5.500 4L9.300 3.600Z" fill="#f8d030" stroke="#c89810" stroke-width=".8"/><path d="M13 10.500V12.500H7" fill="none" stroke="#0a0a3c" stroke-width="1.400"/><path d="M8 10L5 12.500L8 15Z" fill="#0a0a3c"/></svg>
<div class="a" style="left:684px;top:55px;width:0;height:23px;border-left:1px dotted #9a9a9a"></div>
<svg style="left:691px;top:59px" width="16" height="16" viewBox="0 0 16 16"><path d="M3.800 2.500C-1.500 5 -1.500 12 6.500 15L7.200 13.600C3 12 2 8.500 4.500 6.500Z" fill="#0a0a3c"/><path d="M3.200 -.2L7.600 4L3.600 8.200Z" fill="#0a0a3c"/><circle cx="12.2" cy="4" r="4.100" fill="#d00818"/><circle cx="12.2" cy="3.5" r="3.200" fill="#e82030"/><path d="M10 1.8l4.400 4.400m0 -4.400l-4.400 4.400" stroke="#fff" stroke-width="1.700"/><path d="M12.2 1.2v5.600M9.4 4h5.600" stroke="#fff" stroke-width=".7"/></svg>
<svg style="left:715px;top:59px" width="16" height="16" viewBox="0 0 16 16"><g transform="matrix(1 0 0 -1 0 15.500)"><path d="M3.800 2.500C-1.500 5 -1.500 12 6.500 15L7.200 13.600C3 12 2 8.500 4.500 6.500Z" fill="#0a0a3c"/><path d="M3.200 -.2L7.600 4L3.600 8.200Z" fill="#0a0a3c"/></g><circle cx="12.2" cy="11" r="4.100" fill="#d00818"/><circle cx="12.2" cy="10.5" r="3.200" fill="#e82030"/><path d="M10 8.8l4.400 4.400m0 -4.400l-4.400 4.400" stroke="#fff" stroke-width="1.700"/><path d="M12.2 8.2v5.600M9.4 11h5.600" stroke="#fff" stroke-width=".7"/></svg>
<svg style="left:739px;top:59px" width="16" height="16" viewBox="0 0 16 16"><path d="M3.800 2.500C-1.500 5 -1.500 12 6.500 15L7.200 13.600C3 12 2 8.500 4.500 6.500Z" fill="#4a4a4a"/><path d="M3.200 -.2L7.600 4L3.600 8.200Z" fill="#4a4a4a"/><rect x="6.5" y="0" width="9" height="13" fill="#9c9c9c"/><rect x="7" y="0.5" width="2.500" height="6" fill="#c8c8c8"/><rect x="7.5" y="7.5" width="7" height="4.500" fill="#fff" stroke="#555" stroke-width=".8"/><rect x="8.7" y="8.7" width="2" height="2" fill="none" stroke="#222" stroke-width=".9"/><path d="M12.8 8.2v3" stroke="#222" stroke-width="1"/></svg>
<svg style="left:763px;top:59px" width="16" height="16" viewBox="0 0 16 16"><g transform="matrix(1 0 0 -1 0 15.500)"><path d="M3.800 2.500C-1.500 5 -1.500 12 6.500 15L7.200 13.600C3 12 2 8.500 4.500 6.500Z" fill="#4a4a4a"/><path d="M3.200 -.2L7.600 4L3.600 8.200Z" fill="#4a4a4a"/></g><rect x="6.5" y="2" width="9" height="13" fill="#9c9c9c"/><rect x="7" y="2.5" width="2.500" height="6" fill="#c8c8c8"/><rect x="7.5" y="9.5" width="7" height="4.500" fill="#fff" stroke="#555" stroke-width=".8"/><rect x="8.7" y="10.7" width="2" height="2" fill="none" stroke="#222" stroke-width=".9"/><path d="M12.8 10.2v3" stroke="#222" stroke-width="1"/></svg>
<svg style="left:787px;top:59px" width="16" height="16" viewBox="0 0 16 16"><path d="M0 3H4M0 7.500H4M12 5H15" stroke="#8e8e8e" stroke-width="1.600"/><rect x="3.500" y="0" width="9" height="10" fill="#8e8e8e"/><path d="M6.500 2L10.500 5L6.500 8Z" fill="#fff"/><path d="M4 10.500L8 15L15.500 6.500" fill="none" stroke="#7c7c7c" stroke-width="2.200"/></svg>
<div class="a" style="left:808px;top:55px;width:0;height:23px;border-left:1px dotted #9a9a9a"></div>
<svg style="left:816px;top:59px" width="16" height="16" viewBox="0 0 16 16"><g transform="matrix(1 0 0 -1 0 15.500)"><path d="M3.800 2.500C-1.500 5 -1.500 12 6.500 15L7.200 13.600C3 12 2 8.500 4.500 6.500Z" fill="#0a0a3c"/><path d="M3.200 -.2L7.600 4L3.600 8.200Z" fill="#0a0a3c"/></g><path d="M8 4.800H15M8 7.600H15" stroke="#a0a0a0" stroke-width="1.800"/><path d="M8 11H15" stroke="#2848f0" stroke-width="1.800"/></svg>
<svg style="left:841px;top:59px" width="16" height="16" viewBox="0 0 16 16"><path d="M2.200 0V9" stroke="#1a1a2a" stroke-width="2.200"/><path d="M6 7.800H13M6 11H13M6 14.200H13" stroke="#8c8c8c" stroke-width="1.900"/></svg>
<svg style="left:863px;top:59px" width="16" height="16" viewBox="0 0 16 16"><path d="M1 0L6 7M5.500 0L3 6" stroke="#2a2a2a" stroke-width="1.400"/><path d="M3 2L10 7.500" stroke="#7a7a7a" stroke-width="1.300"/><path d="M9 7.800H16.500M9 11H16.500M9 14.200H16.500" stroke="#8c8c8c" stroke-width="1.900"/></svg>
<div class="a" style="left:885px;top:55px;width:0;height:23px;border-left:1px dotted #9a9a9a"></div>
<svg style="left:893px;top:59px" width="16" height="16" viewBox="0 0 16 16"><g transform="matrix(1 0 0 -1 0 15.500)"><path d="M3.800 2.500C-1.500 5 -1.500 12 6.500 15L7.200 13.600C3 12 2 8.500 4.500 6.500Z" fill="#0a0a3c"/><path d="M3.200 -.2L7.600 4L3.600 8.200Z" fill="#0a0a3c"/></g><path d="M9 3.5h5v12l-2.500 -2.500l-2.500 2.500z" fill="#2a40e0"/><path d="M10 4v11" stroke="#8a98f8" stroke-width="1"/></svg>
<svg style="left:917px;top:59px" width="16" height="16" viewBox="0 0 16 16"><path d="M3.800 2.500C-1.500 5 -1.500 12 6.500 15L7.200 13.600C3 12 2 8.500 4.500 6.500Z" fill="#0a0a3c"/><path d="M3.200 -.2L7.600 4L3.600 8.200Z" fill="#0a0a3c"/><path d="M9 0.5h5v12l-2.500 -2.500l-2.500 2.500z" fill="#2a40e0"/><path d="M10 1v11" stroke="#8a98f8" stroke-width="1"/></svg>
<div class="a" style="left:938px;top:55px;width:0;height:23px;border-left:1px dotted #9a9a9a"></div>
<svg style="left:946px;top:59px" width="16" height="16" viewBox="0 0 16 16"><circle cx="5.500" cy="10.500" r="4.500" fill="#f07020"/><path d="M5.500 6A4.500 4.500 0 0 0 5.500 15Z" fill="#2a50e0"/><circle cx="9.500" cy="4" r="3.200" fill="#f4f8ff" stroke="#1a2a7a" stroke-width="1.600"/><path d="M11.800 6.300L15.500 10" stroke="#5a88d8" stroke-width="2.400"/><path d="M11.800 6.300L15.500 10" stroke="#1a2a7a" stroke-width="2.400" stroke-dasharray="1.200 1.200"/></svg>
<div class="a" style="left:967px;top:56px;width:22px;height:22px;background:#fdfdff;border:1px solid #3c78d8;border-radius:2px;box-sizing:border-box"></div>
<svg style="left:970px;top:59px" width="16" height="16" viewBox="0 0 16 16"><rect x="0.500" y="2" width="5" height="3.500" rx="1" fill="#fff" stroke="#0a0a3c" stroke-width="1.300"/><rect x="7.500" y="2" width="5" height="3.500" rx="1" fill="#fff" stroke="#0a0a3c" stroke-width="1.300"/><path d="M5.500 3H7.500M12.500 3C15 2.500 15.500 4 15.500 5.500" fill="none" stroke="#0a0a3c" stroke-width="1.200"/><path d="M8 9L14 12L8 15Z" fill="#28c840"/><path d="M8 15L14 12L14.500 13.500Z" fill="#c8c8c8"/></svg>
<div class="a" style="left:991px;top:55px;width:0;height:23px;border-left:1px dotted #9a9a9a"></div>
<svg style="left:999px;top:59px" width="16" height="16" viewBox="0 0 16 16"><path d="M1 3V12A4.500 2 0 0 0 10 12V3Z" fill="#b0b0b0"/><path d="M7 4V13.800A4.500 2 0 0 0 10 12V3Z" fill="#8e8e8e"/><ellipse cx="5.500" cy="3" rx="4.500" ry="2" fill="#d8d8d8" stroke="#b0b0b0" stroke-width=".6"/><rect x="10.500" y="10" width="5" height="5" fill="#d8d8d8" stroke="#7a7a7a"/><path d="M11.500 10V8.500A1.500 1.500 0 0 1 14.500 8.500V10" fill="none" stroke="#7a7a7a" stroke-width="1.200"/></svg>

<div class="a" style="left:300px;top:80px;width:1227px;height:18px;background:#b2b2b2;"></div>
<span class="t" style="left:919px;top:84px;font-size:12.5px;letter-spacing:0.4px;font-weight:bold;color:#fff">块接口</span>
<div class="a" style="left:300px;top:98px;width:1227px;height:1px;background:#8a8a8a;"></div>
<div class="a" style="left:300px;top:99px;width:1227px;height:5px;background:#dcdcdc;"></div>
<div class="a" style="left:300px;top:99px;width:1px;height:6px;background:#8a8a8a;"></div>
<div class="a" style="left:911px;top:99px;width:1px;height:5px;background:#8a8a8a;"></div>
<div class="a" style="left:934px;top:99px;width:1px;height:5px;background:#8a8a8a;"></div>
<div class="a" style="left:945px;top:99px;width:1px;height:5px;background:#8a8a8a;"></div>
<div class="a" style="left:968px;top:99px;width:1px;height:5px;background:#8a8a8a;"></div>
<div class="a" style="left:946px;top:99px;width:22px;height:5px;background:#c4c4c4;"></div>
<svg style="left:919px;top:100px" width="7" height="4" viewBox="0 0 7 4"><path d="M0 4H7L3.5 0Z" fill="#8a8a8a"/></svg>
<svg style="left:953px;top:100px" width="7" height="4" viewBox="0 0 7 4"><path d="M0 0H7L3.5 4Z" fill="#000"/></svg>
<div class="a" style="left:300px;top:104px;width:1227px;height:1px;background:#ffffff;"></div>
<div class="a" style="left:300px;top:105px;width:1227px;height:1px;background:#8a8a8a;"></div>
<div class="a" style="left:300px;top:106px;width:1227px;height:38px;background:#ebebeb;"></div>
<div class="a" style="left:302px;top:108px;width:32px;height:32px;background:#ffffff;"></div>
<div class="a" style="left:336px;top:108px;width:32px;height:32px;background:#ffffff;"></div>
<div class="a" style="left:370px;top:108px;width:32px;height:32px;background:#ffffff;"></div>
<div class="a" style="left:404px;top:108px;width:32px;height:32px;background:#ffffff;"></div>
<div class="a" style="left:438px;top:108px;width:32px;height:32px;background:#ffffff;"></div>
<div class="a" style="left:472px;top:108px;width:32px;height:32px;background:#ffffff;"></div>
<svg style="left:300px;top:106px" width="210" height="37" viewBox="0 0 210 37"><g transform="translate(-300 -106)" fill="none" stroke="#0a0a32" stroke-width="2"><path d="M307 124H315M315 120V128M321.500 120V128M321.500 124H329.500"/><path d="M340 124H348M348 120V128M357.500 120V128M357.500 124H365"/><path d="M351.500 127.500L354 120.500" stroke="#555" stroke-width="1.300"/><path d="M372 124H382M390 124H400"/><path d="M385 119.500Q381.500 124 385 128.500M387 119.500Q390.500 124 387 128.500" stroke-width="1.700"/><rect x="413.700" y="117.700" width="12.600" height="12.600" stroke-width="1.400"/><path d="M411 120.500H413.500M426.500 120.500H429" stroke-width="1.600"/><path d="M446 120V124H457"/><path d="M456 120.500L461 124L456 127.500Z" fill="#0a0a32" stroke="none"/><path d="M479 124H491V119"/><path d="M487 119.500L491 115.500L495.500 119.500Z" fill="#0a0a32" stroke="none"/></g><text x="120" y="21.300" font-size="9.500" text-anchor="middle" fill="#0a0a32" font-family="Liberation Sans,sans-serif">??</text></svg>
<div class="a" style="left:334px;top:143px;width:1px;height:18px;background:#e4e4e4;"></div>
<span class="t" style="left:337px;top:144px;font-size:12px;color:#7f7f7f">注释</span>
<div class="a" style="left:320px;top:163px;width:568px;height:1px;background:#c9c9ea;"></div>
<div class="a" style="left:326px;top:173px;width:2px;height:171px;background:#00ff00;"></div>
<div class="a" style="left:328px;top:220px;width:47px;height:2px;background:#00ff00;"></div>
<div class="a" style="left:375px;top:213px;width:2px;height:15px;background:#00ff00;"></div>
<div class="a" style="left:389px;top:213px;width:2px;height:15px;background:#00ff00;"></div>
<div class="a" style="left:391px;top:220px;width:96px;height:2px;background:#00ff00;"></div>
<div class="a" style="left:487px;top:213px;width:2px;height:15px;background:#00ff00;"></div>
<div class="a" style="left:501px;top:213px;width:2px;height:15px;background:#00ff00;"></div>
<svg style="left:487px;top:213px" width="16" height="15" viewBox="0 0 16 15"><path d="M1.500 15L14.500 0" stroke="#00ff00" stroke-width="1.800" /></svg>
<div class="a" style="left:503px;top:220px;width:318px;height:2px;background:#00ff00;"></div>
<svg style="left:820px;top:212px" width="24" height="17" viewBox="0 0 24 17"><path d="M3.500 .5Q-1 8.500 3.500 16.500M20.500 .5Q25 8.500 20.500 16.500" fill="none" stroke="#00ff00" stroke-width="2"/></svg>
<div class="a" style="left:843px;top:220px;width:38px;height:2px;background:#00ff00;"></div>
<div class="a" style="left:879px;top:217px;width:2px;height:8px;background:#00ff00;"></div>
<span class="addr" style="left:323px;top:181px;width:120px;text-align:center">%M101.4</span>
<span class="sym" style="left:323px;top:195px;width:120px;text-align:center">"轴1正传1"</span>
<span class="addr" style="left:435px;top:181px;width:120px;text-align:center">%M101.5</span>
<span class="sym" style="left:435px;top:195px;width:120px;text-align:center">"轴1反转1"</span>
<span class="addr" style="left:771px;top:181px;width:120px;text-align:center">%M101.7</span>
<span class="sym" style="left:771px;top:195px;width:120px;text-align:center">"正传中1"</span>
<div class="a" style="left:328px;top:296px;width:47px;height:2px;background:#00ff00;"></div>
<div class="a" style="left:375px;top:289px;width:2px;height:6px;background:#0000ff;"></div>
<div class="a" style="left:375px;top:298px;width:2px;height:6px;background:#0000ff;"></div>
<div class="a" style="left:389px;top:289px;width:2px;height:6px;background:#0000ff;"></div>
<div class="a" style="left:389px;top:298px;width:2px;height:6px;background:#0000ff;"></div>
<div class="a" style="left:391px;top:296px;width:96px;height:2px;background:repeating-linear-gradient(90deg,#0000ff 0,#0000ff 6.5px,transparent 6.5px,transparent 9.5px)"></div>
<div class="a" style="left:487px;top:289px;width:2px;height:6px;background:#0000ff;"></div>
<div class="a" style="left:487px;top:298px;width:2px;height:6px;background:#0000ff;"></div>
<div class="a" style="left:501px;top:289px;width:2px;height:6px;background:#0000ff;"></div>
<div class="a" style="left:501px;top:298px;width:2px;height:6px;background:#0000ff;"></div>
<svg style="left:487px;top:289px" width="16" height="15" viewBox="0 0 16 15"><path d="M1.500 15L14.500 0" stroke="#0000ff" stroke-width="1.800" stroke-dasharray="6 2.500"/></svg>
<div class="a" style="left:503px;top:296px;width:318px;height:2px;background:repeating-linear-gradient(90deg,#0000ff 0,#0000ff 6.5px,transparent 6.5px,transparent 9.5px)"></div>
<svg style="left:820px;top:288px" width="24" height="17" viewBox="0 0 24 17"><path d="M3.500 .5Q-1 8.500 3.500 16.500M20.500 .5Q25 8.500 20.500 16.500" fill="none" stroke="#0000ff" stroke-width="2"/></svg>
<div class="a" style="left:843px;top:296px;width:36px;height:2px;background:repeating-linear-gradient(90deg,#0000ff 0,#0000ff 6.5px,transparent 6.5px,transparent 9.5px)"></div>
<div class="a" style="left:879px;top:293px;width:2px;height:8px;background:#0000ff;"></div>
<span class="addr" style="left:323px;top:257px;width:120px;text-align:center">%M101.5</span>
<span class="sym" style="left:323px;top:271px;width:120px;text-align:center">"轴1反转1"</span>
<span class="addr" style="left:435px;top:257px;width:120px;text-align:center">%M101.4</span>
<span class="sym" style="left:435px;top:271px;width:120px;text-align:center">"轴1正传1"</span>
<span class="addr" style="left:771px;top:257px;width:120px;text-align:center">%M101.6</span>
<span class="sym" style="left:771px;top:271px;width:120px;text-align:center">"反转中1"</span>
<div class="a" style="left:300px;top:357px;width:1227px;height:21px;background:#d9d9d9;"></div>
<svg style="left:305px;top:364px" width="10" height="6" viewBox="0 0 10 6"><path d="M0 0H10L5 6Z" fill="#000"/></svg>
<span class="t" style="left:339px;top:360px;font-size:14.500px;font-weight:bold">程序段 <span style="font-weight:bold">5</span> :</span>
<span class="t" style="left:420px;top:365px;font-size:9px;color:#555;letter-spacing:0.6px">.....</span>
<div class="a" style="left:334px;top:383px;width:554px;height:1px;background:#e4e4e4;"></div>
<div class="a" style="left:334px;top:383px;width:1px;height:20px;background:#e4e4e4;"></div>
<span class="t" style="left:337px;top:386px;font-size:12px;color:#7f7f7f">注释</span>
<div class="a" style="left:320px;top:405px;width:568px;height:1px;background:#c9c9ea;"></div>
<div class="a" style="left:320px;top:412px;width:569px;height:424px;border:1px solid #c9c9ea;box-sizing:border-box"></div>
<div class="a" style="left:326px;top:415px;width:2px;height:417px;background:#00ff00;"></div>
<div class="a" style="left:328px;top:538px;width:126px;height:2px;background:#00ff00;"></div>
<div class="a" style="left:649px;top:538px;width:232px;height:2px;background:#00ff00;"></div>
<div class="a" style="left:879px;top:535px;width:2px;height:8px;background:#00ff00;"></div>
<div class="a" style="left:454px;top:493px;width:195px;height:302px;background:#e0e1e9;border:2px solid #00ff00;box-sizing:border-box"></div>
<div class="a" style="left:454px;top:493px;width:195px;height:302px;border:1px dotted #223322;box-sizing:border-box"></div>
<div class="a" style="left:456px;top:495px;width:191px;height:32px;background:#c9cbd9;"></div>
<div class="a" style="left:456px;top:791px;width:191px;height:2px;background:linear-gradient(#c8c9d2,#aeb0bc);"></div>
<span class="t" style="left:454px;top:496px;width:195px;text-align:center;font-size:12px;font-weight:bold"><span class="l">MC_MoveJog</span></span>
<div class="a" style="left:608px;top:509px;width:16px;height:16px;background:#ececf2;border:1px solid #8a8a96;box-sizing:border-box"></div>
<div class="a" style="left:626px;top:509px;width:16px;height:16px;background:#ececf2;border:1px solid #8a8a96;box-sizing:border-box"></div>
<svg style="left:610px;top:511px" width="12" height="12" viewBox="0 0 12 12"><path d="M0 7L3 2H9L12 7V12H0Z" fill="#1c2fc0"/><path d="M3.500 2.500H8.500L10 6.500H2.500Z" fill="#e8ecff"/></svg>
<svg style="left:628px;top:511px" width="12" height="12" viewBox="0 0 12 12"><path d="M3 1V5A2 2 0 0 0 7 5V1M5 7V9A2 2 0 0 0 9 9" fill="none" stroke="#1a1a3a" stroke-width="1.100"/><circle cx="9.300" cy="8.500" r="1.200" fill="#1a1a3a"/></svg>
<span class="t" style="left:454px;top:447px;width:195px;text-align:center;font-size:11.5px;font-weight:bold;color:#1ba1a8;letter-spacing:-0.4px">%DB7</span>
<span class="t" style="left:454px;top:461px;width:195px;text-align:center;font-size:11.500px"><span class="l">"MC_MoveJog_</span></span>
<span class="t" style="left:454px;top:475px;width:195px;text-align:center;font-size:11.500px"><span class="l">DB"</span></span>
<span class="pin" style="left:458px;top:534px"><span class="lp">EN</span><i class="ul"></i></span>
<span class="pin" style="right:883px;top:534px"><span class="lp">ENO</span><i class="ul"></i></span>
<span class="pin" style="right:883px;top:553px"><span class="lp">InVelocity</span><i class="ul"></i></span>
<span class="pin" style="left:458px;top:591px"><span class="lp">Axis</span><i class="ul"></i></span>
<span class="pin" style="right:883px;top:610px"><span class="lp">Busy</span><i class="ul"></i></span>
<span class="pin" style="left:458px;top:648px"><span class="lp">JogForward</span><i class="ul"></i></span>
<span class="pin" style="right:883px;top:667px"><span class="lp">Error</span><i class="ul"></i></span>
<span class="pin" style="left:458px;top:705px"><span class="lp">JogBackward</span><i class="ul"></i></span>
<span class="pin" style="left:458px;top:781px"><span class="lp">Velocity</span><i class="ul"></i></span>
<svg style="left:548px;top:788px" width="7" height="4" viewBox="0 0 7 4"><path d="M0 0H7L3.500 4Z" fill="#111"/></svg>
<div class="a" style="left:649px;top:558px;width:15px;height:1px;background:#9a9a9a;"></div>
<div class="a" style="left:663px;top:555px;width:1px;height:7px;background:#9a9a9a;"></div>
<span class="sym" style="left:666px;top:553px;">...</span>
<span class="addr" style="right:1091px;top:575px;letter-spacing:-0.9px">%DB1</span>
<span class="sym" style="right:1091px;top:589px;">"轴_1"</span>
<div class="a" style="left:439px;top:595px;width:15px;height:2px;background:#9a9a9a;"></div>
<span class="val vr" style="left:666px;top:578px;">FALSE</span>
<span class="addr" style="left:666px;top:594px;">%M102.0</span>
<span class="sym" style="left:666px;top:608px;">"运行中1"</span>
<div class="a" style="left:649px;top:614px;width:5px;height:2px;background:#0000ff;"></div>
<div class="a" style="left:656px;top:614px;width:5px;height:2px;background:#0000ff;"></div>
<div class="a" style="left:662px;top:611px;width:2px;height:8px;background:#0000ff;"></div>
<span class="val vl" style="right:1091px;top:616px;">TRUE</span>
<span class="addr" style="right:1091px;top:632px;">%M101.7</span>
<span class="sym" style="right:1091px;top:646px;">"正传中1"</span>
<div class="a" style="left:439px;top:652px;width:15px;height:2px;background:#00ff00;"></div>
<span class="val vr" style="left:666px;top:635px;">FALSE</span>
<span class="addr" style="left:666px;top:651px;">%M102.1</span>
<span class="sym" style="left:666px;top:665px;">"手动错误"</span>
<div class="a" style="left:649px;top:671px;width:5px;height:2px;background:#0000ff;"></div>
<div class="a" style="left:656px;top:671px;width:5px;height:2px;background:#0000ff;"></div>
<div class="a" style="left:662px;top:668px;width:2px;height:8px;background:#0000ff;"></div>
<span class="val vl" style="right:1091px;top:673px;">FALSE</span>
<span class="addr" style="right:1091px;top:689px;">%M101.6</span>
<span class="sym" style="right:1091px;top:703px;">"反转中1"</span>
<div class="a" style="left:439px;top:709px;width:6px;height:2px;background:#0000ff;"></div>
<div class="a" style="left:447px;top:709px;width:6px;height:2px;background:#0000ff;"></div>
<span class="val vl" style="right:1091px;top:734px;">0.0</span>
<span class="addr" style="right:1091px;top:750px;letter-spacing:-0.3px">%DB3.DBD0</span>
<span class="sym" style="right:1091px;top:764px;">"数据块_1".</span>
<span class="sym" style="right:1091px;top:778px;">电机1速度</span>
<div class="a" style="left:439px;top:785px;width:15px;height:2px;background:#000;"></div>
<div class="a" style="left:300px;top:846px;width:1227px;height:21px;background:#d9d9d9;"></div>
<svg style="left:305px;top:853px" width="10" height="6" viewBox="0 0 10 6"><path d="M0 0H10L5 6Z" fill="#000"/></svg>
<span class="t" style="left:339px;top:849px;font-size:14.500px;font-weight:bold">程序段 <span style="font-weight:bold">6</span> :</span>
<span class="t" style="left:420px;top:854px;font-size:9px;color:#555;letter-spacing:0.6px">.....</span>
<div class="a" style="left:334px;top:872px;width:554px;height:1px;background:#e4e4e4;"></div>
<div class="a" style="left:334px;top:872px;width:1px;height:19px;background:#e4e4e4;"></div>
<span class="t" style="left:337px;top:875px;font-size:12px;color:#7f7f7f">注释</span>
<div class="a" style="left:300px;top:892px;width:1227px;height:5px;background:#ebebeb;"></div>
<div class="a" style="left:1304px;top:892px;width:155px;height:8px;background:#fff;border:1px solid #7f7f7f;border-radius:2px;box-sizing:border-box"></div>
<div class="a" style="left:1443px;top:893px;width:1px;height:6px;background:#7f7f7f;"></div>
<div class="a" style="left:1498px;top:895px;width:8px;height:2px;background:#8a8a8a;"></div>

</body></html>
